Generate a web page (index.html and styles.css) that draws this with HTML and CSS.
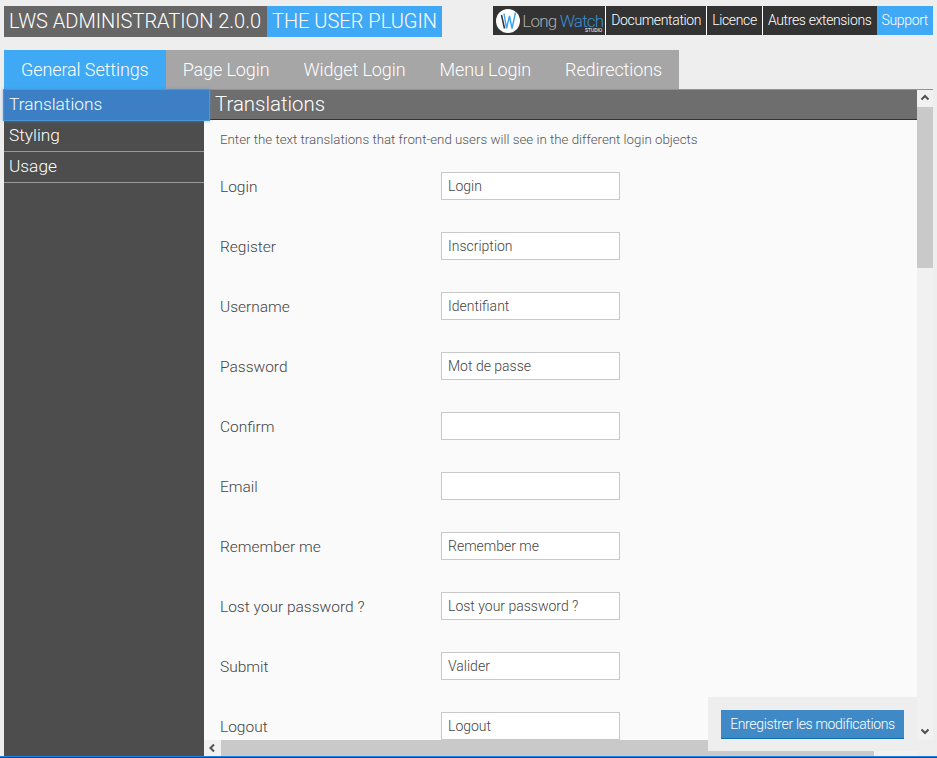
FILE: index.html
```html
<!DOCTYPE html>
<html lang="fr">
<head>
  <meta charset="UTF-8">
  <title>LWS Administration</title>
  <link rel="stylesheet" href="styles.css">
</head>
<body>

  <div class="top">
    <div class="title">
      <span class="title-name">LWS ADMINISTRATION 2.0.0</span>
      <span class="title-plugin">THE USER PLUGIN</span>
    </div>
    <div class="links">
      <div class="brand">
        <svg class="brand-logo" width="24" height="24" viewBox="0 0 24 24">
          <circle cx="12" cy="12" r="12" fill="#fff"/>
          <path d="M5.5 6 L8.5 19.5" fill="none" stroke="#333" stroke-width="1.5"/>
          <path d="M8 4.5 L10.5 19.5 L13.5 7 L16 19.5 L19.5 3.5" fill="none" stroke="#3ba4f2" stroke-width="1.4"/>
        </svg>
        <span class="brand-name">Long <span class="brand-blue">Watch</span><small>STUDIO</small></span>
      </div>
      <a class="link">Documentation</a>
      <a class="link">Licence</a>
      <a class="link">Autres extensions</a>
      <a class="link link-on">Support</a>
    </div>
  </div>

  <div class="tabs">
    <a class="tab tab-on">General Settings</a>
    <a class="tab">Page Login</a>
    <a class="tab">Widget Login</a>
    <a class="tab">Menu Login</a>
    <a class="tab">Redirections</a>
  </div>

  <div class="main">
    <div class="side">
      <a class="side-item side-on">Translations</a>
      <a class="side-item">Styling</a>
      <a class="side-item">Usage</a>
    </div>

    <div class="panel">
      <div class="view">
        <div class="page">
          <h2 class="page-title">Translations</h2>
          <div class="page-body">
            <p class="intro">Enter the text translations that front-end users will see in the different login objects</p>
            <div class="row"><label>Login</label><input type="text" value="Login"></div>
            <div class="row"><label>Register</label><input type="text" value="Inscription"></div>
            <div class="row"><label>Username</label><input type="text" value="Identifiant"></div>
            <div class="row"><label>Password</label><input type="text" value="Mot de passe"></div>
            <div class="row"><label>Confirm</label><input type="text" value=""></div>
            <div class="row"><label>Email</label><input type="text" value=""></div>
            <div class="row"><label>Remember me</label><input type="text" value="Remember me"></div>
            <div class="row"><label>Lost your password ?</label><input type="text" value="Lost your password ?"></div>
            <div class="row"><label>Submit</label><input type="text" value="Valider"></div>
            <div class="row"><label>Logout</label><input type="text" value="Logout"></div>
          </div>
        </div>
        <div class="vbar">
          <svg class="arrow" width="16" height="16" viewBox="0 0 16 16"><path d="M4.5 9.5 L8 6 L11.5 9.5" fill="none" stroke="#505050" stroke-width="2"/></svg>
          <div class="vthumb"></div>
          <svg class="arrow arrow-end" width="16" height="16" viewBox="0 0 16 16"><path d="M4.5 6.5 L8 10 L11.5 6.5" fill="none" stroke="#505050" stroke-width="2"/></svg>
        </div>
      </div>
      <div class="hbar">
        <svg class="arrow" width="17" height="16" viewBox="0 0 17 16"><path d="M10 4.5 L6.5 8 L10 11.5" fill="none" stroke="#505050" stroke-width="2"/></svg>
        <div class="hthumb"></div>
      </div>
      <div class="save">
        <button class="save-btn">Enregistrer les modifications</button>
      </div>
    </div>
  </div>

  <div class="taskbar"></div>

</body>
</html>
```

FILE: styles.css
```css
html, body {
  height: 100%;
}
body {
  margin: 0;
  background-color: #EEEEEE;
  font-family: Roboto, "Liberation Sans", sans-serif;
  font-weight: 300;
  color: #444444;
  overflow: hidden;
  display: flex;
  flex-direction: column;
}
a {
  display: block;
}

.top {
  display: flex;
  justify-content: space-between;
  align-items: flex-start;
  padding: 6px 4px 0 4px;
  height: 44px;
  box-sizing: content-box;
}
.title {
  display: flex;
  font-size: 20px;
  line-height: 31px;
  color: #FFFFFF;
}
.title-name {
  width: 263px;
  padding-left: 5px;
  box-sizing: border-box;
  background-color: #666666;
}
.title-plugin {
  width: 175px;
  padding-left: 5px;
  box-sizing: border-box;
  background-color: #3FA9F5;
}

.links {
  display: flex;
  height: 29px;
  background-color: #333333;
  font-size: 14px;
  letter-spacing: -0.35px;
  line-height: 28px;
  color: #FFFFFF;
}
.brand {
  display: flex;
  align-items: center;
  width: 112px;
  padding-left: 3px;
  box-sizing: border-box;
  white-space: nowrap;
}
.brand-logo {
  flex: none;
}
.brand-name {
  position: relative;
  margin-left: 2px;
  font-size: 17px;
  letter-spacing: -0.8px;
  line-height: 16px;
  color: #AAAAAA;
}
.brand-blue {
  color: #3A8FD0;
}
.brand-name small {
  position: absolute;
  right: 1px;
  bottom: -4px;
  font-size: 5px;
  letter-spacing: 0;
  line-height: 5px;
  font-weight: 400;
  color: #FFFFFF;
}
.link {
  padding: 0 5px;
  border-left: 1px solid #FFFFFF;
}
.link-on {
  background-color: #3FA9F5;
  border-left: 0;
}

.tabs {
  display: flex;
  margin-left: 4px;
  height: 39px;
  font-size: 18px;
  letter-spacing: -0.1px;
  line-height: 39px;
  color: #FFFFFF;
}
.tab {
  padding: 0 17px;
  background-color: #A6A6A6;
}
.tab-on {
  background-color: #3FA9F5;
}

.main {
  flex: 1;
  min-height: 0;
  display: flex;
  margin: 0 4px;
  border-top: 1px solid #3FA9F5;
}
.side {
  width: 200px;
  flex: none;
  background-color: #4D4D4D;
  position: relative;
  z-index: 1;
  font-size: 17.3px;
  color: #FFFFFF;
}
.side-item {
  height: 30px;
  line-height: 28px;
  padding-left: 5px;
  border-bottom: 1px solid #999999;
}
.side-on {
  margin: -1px -6px 0 -1px;
  height: 30px;
  background-color: #3C7FC4;
  border: 1px solid #4A97D6;
  box-shadow: 0 0 3px rgba(74, 151, 214, 0.6);
}

.panel {
  flex: 1;
  min-width: 0;
  position: relative;
  display: flex;
  flex-direction: column;
}
.view {
  flex: 1;
  min-height: 0;
  display: flex;
}
.page {
  flex: 1;
  min-width: 0;
  overflow: hidden;
  background-color: #FAFAFA;
}
.page-title {
  margin: 0;
  height: 29px;
  padding-left: 11px;
  background-color: #6E6E6E;
  border-bottom: 1px solid #333333;
  font-size: 20.4px;
  font-weight: 300;
  line-height: 29px;
  color: #FFFFFF;
}
.page-body {
  padding: 0 16px;
}
.intro {
  margin: 0;
  height: 36px;
  font-size: 13.3px;
  line-height: 39px;
  color: #555555;
}
.row {
  display: flex;
  align-items: center;
  height: 60px;
  font-size: 15.5px;
}
.row label {
  width: 221px;
  flex: none;
  padding-top: 2px;
}
.row input {
  width: 179px;
  height: 28px;
  box-sizing: border-box;
  padding: 0 6px;
  border: 1px solid #C8C8C8;
  background-color: #FFFFFF;
  font-family: Roboto, "Liberation Sans", sans-serif;
  font-size: 14px;
  font-weight: 300;
  color: #444444;
}

.vbar {
  width: 16px;
  flex: none;
  display: flex;
  flex-direction: column;
  background-color: #F1F1F1;
}
.vthumb {
  height: 161px;
  margin: 1px 0 0 0;
  background-color: #C9C9C9;
}
.arrow {
  display: block;
  flex: none;
}
.arrow-end {
  margin-top: auto;
  margin-bottom: 1px;
}
.hbar {
  height: 16px;
  flex: none;
  display: flex;
  margin-right: 16px;
  background-color: #F1F1F1;
}
.hthumb {
  width: 653px;
  background-color: #C9C9C9;
}

.save {
  position: absolute;
  right: 16px;
  bottom: 5px;
  padding: 13px 13px 12px 13px;
  background-color: #EEEEEE;
}
.save-btn {
  display: block;
  width: 183px;
  height: 29px;
  padding: 0;
  border: 0;
  border-bottom: 1px solid #0B6FB0;
  background-color: #3F8AC6;
  font-family: Roboto, "Liberation Sans", sans-serif;
  font-size: 14px;
  letter-spacing: -0.35px;
  font-weight: 300;
  color: #FFFFFF;
}

.taskbar {
  height: 1px;
  flex: none;
  border-top: 1px solid #1B86E0;
  background-color: #0C3C78;
}
```
